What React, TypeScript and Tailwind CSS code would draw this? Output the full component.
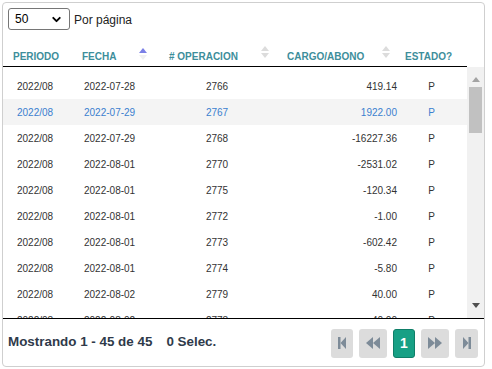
import { ChevronDown } from "lucide-react";

type Row = { periodo: string; fecha: string; op: string; monto: string; estado: string };

const rows: Row[] = [
  { periodo: "2022/08", fecha: "2022-07-28", op: "2766", monto: "419.14", estado: "P" },
  { periodo: "2022/08", fecha: "2022-07-29", op: "2767", monto: "1922.00", estado: "P" },
  { periodo: "2022/08", fecha: "2022-07-29", op: "2768", monto: "-16227.36", estado: "P" },
  { periodo: "2022/08", fecha: "2022-08-01", op: "2770", monto: "-2531.02", estado: "P" },
  { periodo: "2022/08", fecha: "2022-08-01", op: "2775", monto: "-120.34", estado: "P" },
  { periodo: "2022/08", fecha: "2022-08-01", op: "2772", monto: "-1.00", estado: "P" },
  { periodo: "2022/08", fecha: "2022-08-01", op: "2773", monto: "-602.42", estado: "P" },
  { periodo: "2022/08", fecha: "2022-08-01", op: "2774", monto: "-5.80", estado: "P" },
  { periodo: "2022/08", fecha: "2022-08-02", op: "2779", monto: "40.00", estado: "P" },
  { periodo: "2022/08", fecha: "2022-08-02", op: "2778", monto: "40.00", estado: "P" },
];

function SortIcon({ active }: { active?: boolean }) {
  return (
    <svg width="8" height="14" viewBox="0 0 8 14">
      <polygon points="0,6 4,1 8,6" fill={active ? "#7b80e6" : "#dcdcdc"} />
      <polygon points="0,8 4,13 8,8" fill={active ? "#f0f0f0" : "#dcdcdc"} />
    </svg>
  );
}

function PageIcon({ kind }: { kind: "first" | "prev" | "next" | "last" }) {
  const c = "#7d8b98";
  if (kind === "first")
    return (
      <svg width="10" height="12" viewBox="0 0 10 12">
        <rect x="1" y="0" width="2.5" height="12" fill={c} />
        <polygon points="3.5,6 9,0 9,12" fill={c} />
      </svg>
    );
  if (kind === "last")
    return (
      <svg width="10" height="12" viewBox="0 0 10 12">
        <polygon points="6.5,6 1,0 1,12" fill={c} />
        <rect x="6.5" y="0" width="2.5" height="12" fill={c} />
      </svg>
    );
  if (kind === "prev")
    return (
      <svg width="14" height="12" viewBox="0 0 14 12">
        <polygon points="0,6 7,0 7,12" fill={c} />
        <polygon points="7,6 14,0 14,12" fill={c} />
      </svg>
    );
  return (
    <svg width="14" height="12" viewBox="0 0 14 12">
      <polygon points="14,6 7,0 7,12" fill={c} />
      <polygon points="7,6 0,0 0,12" fill={c} />
    </svg>
  );
}

export default function App() {
  return (
    <div className="w-[492px] h-[369px] bg-white p-[2px] text-[#333]" style={{ fontFamily: '"Liberation Sans", Arial, sans-serif' }}>
      <div className="flex h-[365px] w-[483px] flex-col overflow-hidden rounded-[4px] border border-[#cfcfcf]">
        {/* top: per page */}
        <div className="flex h-[27px] items-start gap-[4px] pl-[5px] pt-[5px]">
          <div className="flex h-[22px] w-[62px] items-center justify-between rounded-[3px] border border-[#767676] pl-[6px] pr-[6px] text-[12px] text-black">
            <span>50</span>
            <ChevronDown className="h-[13px] w-[13px]" strokeWidth={3.5} />
          </div>
          <span className="pt-[3px] text-[12px] text-[#222]">Por página</span>
        </div>

        {/* header */}
        <div className="flex">
          <div className="grid h-[37px] w-[464px] grid-cols-[72px_82px_120px_121px_69px] border-b border-black text-[10px] font-bold text-[#3d8e9b]">
            <div className="flex items-end pb-[2px] pl-[10px]">PERIODO</div>
            <div className="flex items-end justify-between pb-[2px] pl-[7px] pr-[10px]">
              <span>FECHA</span>
              <span className="mb-[3px]"><SortIcon active /></span>
            </div>
            <div className="flex items-end justify-between pb-[2px] pl-[12px] pr-[8px]">
              <span># OPERACION</span>
              <span className="mb-[5px]"><SortIcon /></span>
            </div>
            <div className="flex items-end justify-between pb-[2px] pl-[10px] pr-[8px]">
              <span>CARGO/ABONO</span>
              <span className="mb-[5px]"><SortIcon /></span>
            </div>
            <div className="flex items-end pb-[2px] pl-[7px]">ESTADO?</div>
          </div>
          <div className="w-[17px]" />
        </div>

        {/* body */}
        <div className="flex h-[251px]">
          <div className="w-[464px] overflow-hidden pt-[6px] text-[10px]">
            {rows.map((r, i) => (
              <div
                key={i}
                className={`grid h-[26px] grid-cols-[72px_82px_120px_121px_69px] items-center ${i === 1 ? "bg-[#f4f4f4] text-[#3b7fcf]" : ""}`}
              >
                <div className="pl-[14px]">{r.periodo}</div>
                <div className="pl-[9px]">{r.fecha}</div>
                <div className="text-center">{r.op}</div>
                <div className="pr-[1px] text-right">{r.monto}</div>
                <div className="pr-[2px] text-center">{r.estado}</div>
              </div>
            ))}
          </div>
          {/* scrollbar */}
          <div className="flex w-[17px] flex-col bg-[#f1f1f1]">
            <div className="flex h-[20px] items-end justify-center pb-[5px] pt-[2px]">
              <svg width="8" height="5" viewBox="0 0 8 5">
                <polygon points="0,5 4,0 8,5" fill="#a3a3a3" />
              </svg>
            </div>
            <div className="mx-[2px] h-[46px] bg-[#c1c1c1]" />
            <div className="flex-1" />
            <div className="flex h-[18px] items-start justify-center pt-[3px]">
              <svg width="8" height="5" viewBox="0 0 8 5">
                <polygon points="0,0 8,0 4,5" fill="#505050" />
              </svg>
            </div>
          </div>
        </div>

        {/* footer */}
        <div className="flex flex-1 items-center justify-between border-t border-black pl-[5px] pr-[6px]">
          <div className="flex gap-[14px] text-[13.4px] font-bold text-[#2f3a4a]">
            <span>Mostrando 1 - 45 de 45</span>
            <span>0 Selec.</span>
          </div>
          <div className="flex items-center gap-[6px] pt-[1px]">
            <div className="flex h-[29px] w-[22px] items-center justify-center rounded-[3px] bg-[#dcdcdc]">
              <PageIcon kind="first" />
            </div>
            <div className="flex h-[29px] w-[28px] items-center justify-center rounded-[3px] bg-[#dcdcdc]">
              <PageIcon kind="prev" />
            </div>
            <div className="flex h-[29px] w-[22px] items-center justify-center rounded-[3px] border border-[#0f7e68] bg-[#17a085] text-[14px] font-bold text-white">
              1
            </div>
            <div className="flex h-[29px] w-[28px] items-center justify-center rounded-[3px] bg-[#dcdcdc]">
              <PageIcon kind="next" />
            </div>
            <div className="flex h-[29px] w-[23px] items-center justify-center rounded-[3px] bg-[#dcdcdc]">
              <PageIcon kind="last" />
            </div>
          </div>
        </div>
      </div>
    </div>
  );
}
